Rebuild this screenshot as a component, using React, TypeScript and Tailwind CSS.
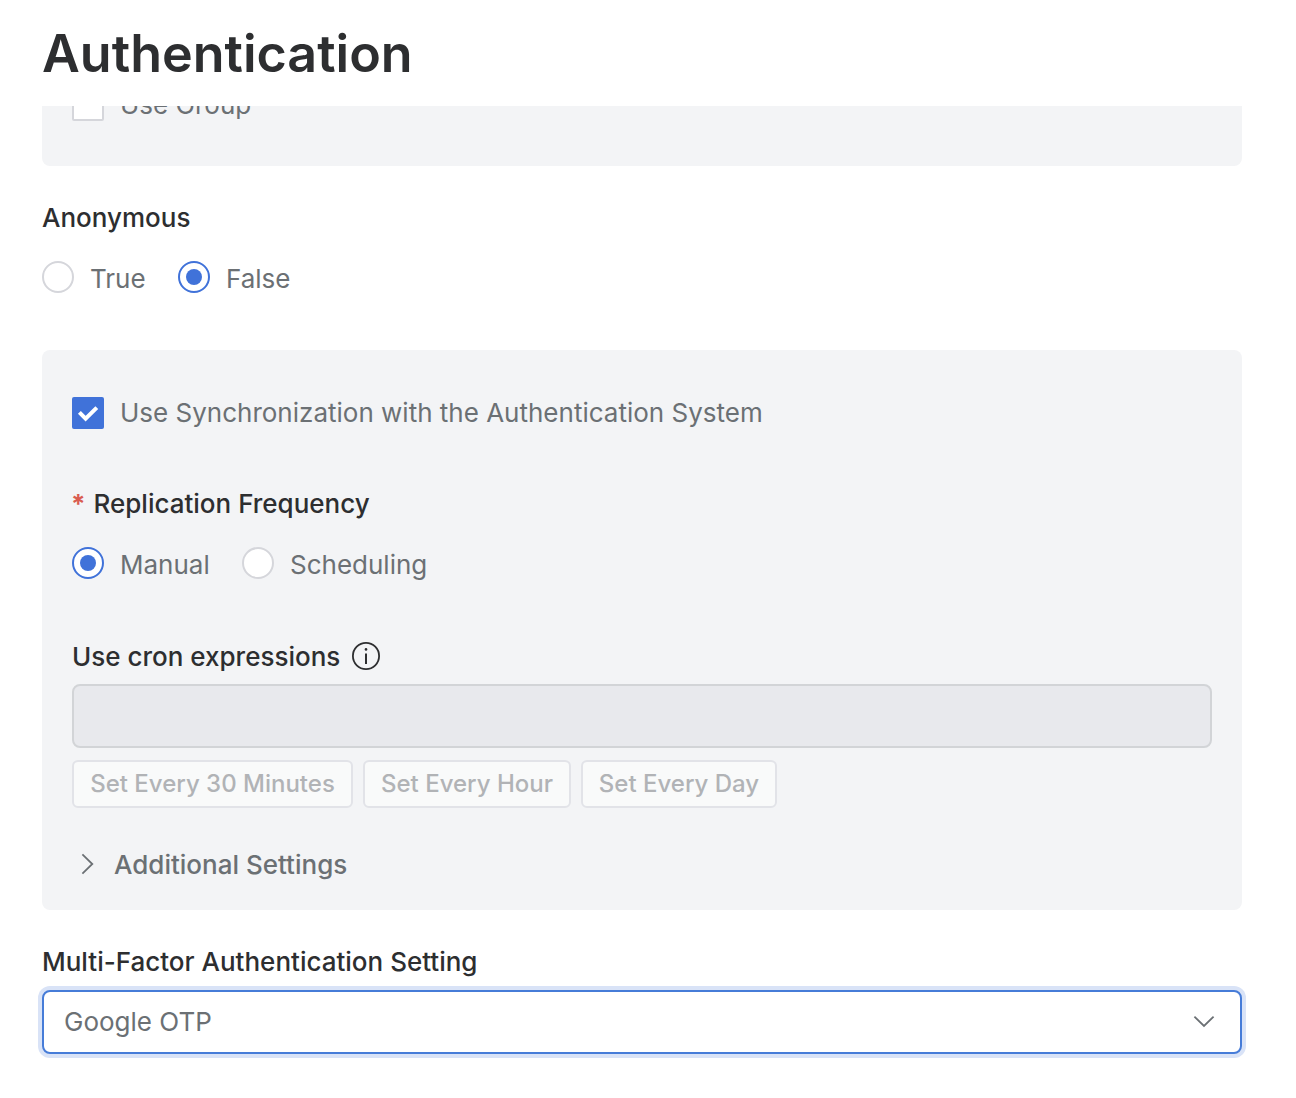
import React from "react";

function Radio({ checked }: { checked?: boolean }) {
  return (
    <span className={`flex h-8 w-8 shrink-0 items-center justify-center rounded-full border-2 bg-white ${checked ? "border-[#4072d9]" : "border-[#d5d6db]"}`}>
      {checked && <span className="h-4 w-4 rounded-full bg-[#4072d9]" />}
    </span>
  );
}

function RadioOption({ label, checked, className }: { label: string; checked?: boolean; className: string }) {
  return (
    <label className={`flex h-8 items-center ${className}`}>
      <Radio checked={checked} />
      <span className="ml-4 mt-[3px] whitespace-nowrap">{label}</span>
    </label>
  );
}

function CronButton({ label, className }: { label: string; className: string }) {
  return (
    <button className={`h-12 whitespace-nowrap rounded-[6px] border-2 border-[#e2e3e8] bg-[#f9fafa] text-[24px] font-medium leading-[44px] text-[#b1b3b6] ${className}`}>
      {label}
    </button>
  );
}

export default function App() {
  return (
    <main className="flex h-[1098px] w-[1296px] flex-col overflow-hidden bg-white pl-[42px] font-['Inter',sans-serif] text-[26px] leading-8 text-[#6b7074]">
      <header className="h-[106px] shrink-0 pt-[23px]">
        <h1 className="text-[52px] font-semibold leading-[62px] text-[#2d2e30]">Authentication</h1>
      </header>

      <section className="h-[60px] w-[1200px] shrink-0 overflow-hidden rounded-b-[8px] bg-[#f3f4f6] pl-[30px]">
        <div className="-mt-[17px] flex h-8 items-center">
          <span className="h-8 w-8 rounded-[2px] border-2 border-[#d5d6db] bg-white" />
          <span className="ml-4">Use Group</span>
        </div>
      </section>

      <h2 className="mt-9 h-8 font-medium text-[#2d2e30]">Anonymous</h2>
      <div className="mt-[27px] flex h-8">
        <RadioOption label="True" className="w-[136px]" />
        <RadioOption label="False" checked className="w-[130px]" />
      </div>

      <section className="mt-[57px] flex h-[560px] w-[1200px] shrink-0 flex-col rounded-[8px] bg-[#f3f4f6] px-[30px] pt-[47px]">
        <div className="flex h-8 shrink-0 items-center">
          <span className="flex h-8 w-8 items-center justify-center rounded-[2px] bg-[#4072d9]">
            <svg width="32" height="32" viewBox="0 0 32 32" fill="none">
              <path d="M7.4 15.4L13.6 21.7L24.8 10.6" stroke="white" strokeWidth="4" />
            </svg>
          </span>
          <span className="ml-4">Use Synchronization with the Authentication System</span>
        </div>
        <h2 className="mt-[59px] flex h-8 shrink-0 font-medium text-[#2d2e30]">
          <span className="-ml-px w-[22.5px] font-bold text-[#d95c50]">*</span>
          Replication Frequency
        </h2>
        <div className="mt-[27px] flex h-8 shrink-0">
          <RadioOption label="Manual" checked className="w-[170px]" />
          <RadioOption label="Scheduling" className="w-[200px]" />
        </div>
        <h2 className="mt-[62px] flex h-8 shrink-0 items-center font-medium text-[#2d2e30]">
          Use cron expressions
          <svg className="mb-[2px] ml-3" width="28" height="28" viewBox="0 0 28 28" fill="none">
            <circle cx="14" cy="14" r="13.1" stroke="currentColor" strokeWidth="1.8" />
            <circle cx="14" cy="7.4" r="1.3" fill="currentColor" />
            <path d="M14 11.5V22" stroke="currentColor" strokeWidth="2" />
          </svg>
        </h2>
        <div className="mt-[11px] h-16 w-[1140px] shrink-0 rounded-[8px] border-2 border-[#d2d4d7] bg-[#e8e9ed]" />
        <div className="mt-3 flex shrink-0 gap-[10px]">
          <CronButton label="Set Every 30 Minutes" className="w-[281px]" />
          <CronButton label="Set Every Hour" className="w-[208px]" />
          <CronButton label="Set Every Day" className="w-[196px]" />
        </div>
        <div className="mt-[41px] flex h-8 shrink-0 items-center font-medium">
          <svg className="mb-[2px] ml-[9px]" width="14" height="22" viewBox="0 0 14 22" fill="none">
            <path d="M1.4 1.4L11.3 11L1.4 20.6" stroke="currentColor" strokeWidth="1.8" />
          </svg>
          <span className="ml-[19px]">Additional Settings</span>
        </div>
      </section>

      <h2 className="mt-9 h-8 shrink-0 font-medium text-[#2d2e30]">Multi-Factor Authentication Setting</h2>
      <div className="mt-3 flex h-16 w-[1200px] shrink-0 items-center justify-between rounded-[8px] border-2 border-[#467cd8] bg-white pl-5 pr-[25px] ring-4 ring-[#d9e3f7]">
        <span>Google OTP</span>
        <svg width="22" height="14" viewBox="0 0 22 14" fill="none">
          <path d="M1.4 1.6L11 11L20.6 1.6" stroke="currentColor" strokeWidth="1.8" />
        </svg>
      </div>
    </main>
  );
}
